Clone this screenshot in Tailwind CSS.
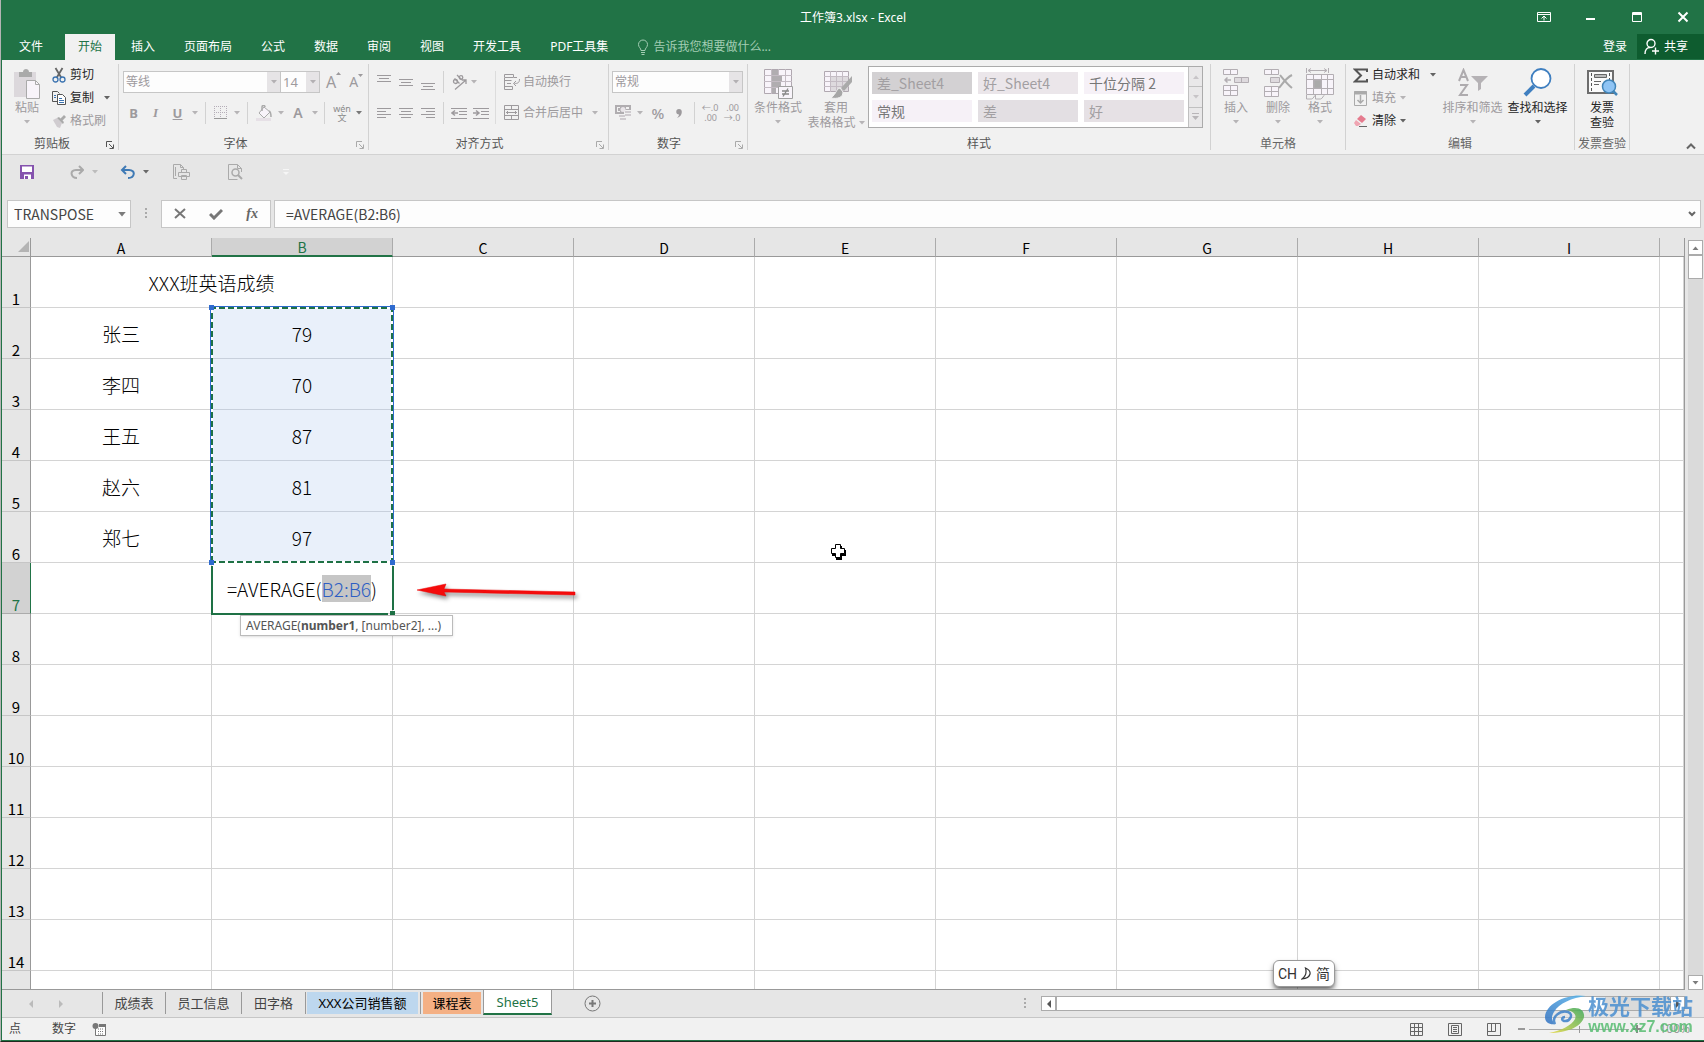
<!DOCTYPE html>
<html lang="zh-CN">
<head>
<meta charset="utf-8">
<title>工作簿3.xlsx - Excel</title>
<script src="https://cdn.jsdelivr.net/npm/@tailwindcss/browser@4"></script>
</head>
<body class="bg-[#1f2a20]">
<svg class="hidden">
  <symbol id="caret" viewBox="0 0 6 4"><path d="M0 0h6L3 3.6z" fill="currentColor" fill-opacity=".7"/></symbol>
  <symbol id="launch" viewBox="0 0 8 8"><path d="M.5 6V.5H6M3 3l4 4M7.500 3.500v4h-4" fill="none" stroke="currentColor"/></symbol>
</svg>
<div class="relative flex h-screen flex-col overflow-hidden border-b border-b-[#1f2a20] border-l border-l-[#b4b4b4] font-['Noto_Sans','Noto_Sans_CJK_SC',sans-serif] text-xs leading-4 text-[#444]">
<div class="flex min-h-0 flex-1 flex-col border-b border-l border-[#217346] bg-[#e6e6e6]">

  <!-- Title bar and ribbon tabs -->
  <header class="bg-[#217346] text-white">
    <div class="grid h-[34px] grid-cols-[1fr_auto_1fr] items-center">
      <span></span>
      <h1 class="pt-px">工作簿3.xlsx - Excel</h1>
      <div class="flex justify-end gap-[34px] pr-[15px]">
        <button aria-label="功能区显示选项"><svg width="14" height="12" fill="none" stroke="#fff"><path d="M.5 1.500h13v9H.5zM.5 3.500h13M7 9.500V5M4.500 7.500L7 5l2.500 2.500"/></svg></button>
        <button aria-label="最小化"><svg width="12" height="12"><path d="M1 7h9v2H1z" fill="#fff"/></svg></button>
        <button aria-label="最大化"><svg width="12" height="12" fill="none" stroke="#fff"><path d="M1.500 1.500h9v9h-9zM1 2.500h10M1 3.500h10"/></svg></button>
        <button aria-label="关闭"><svg width="12" height="12" fill="none" stroke="#fff" stroke-width="2"><path d="M1.500 1.500l9 9M10.500 1.500l-9 9"/></svg></button>
      </div>
    </div>
    <nav class="flex h-[26px] gap-[3px] whitespace-nowrap">
      <button class="w-[60px] pl-[17px] text-left">文件</button>
      <button class="bg-[#f1f1f1] px-[13px] text-[#217346]">开始</button>
      <button class="px-[13px]">插入</button>
      <button class="px-[13px]">页面布局</button>
      <button class="px-[13px]">公式</button>
      <button class="px-[13px]">数据</button>
      <button class="px-[13px]">审阅</button>
      <button class="px-[13px]">视图</button>
      <button class="px-[13px]">开发工具</button>
      <button class="px-[13px]">PDF工具集</button>
      <label class="ml-[13px] flex items-center gap-1 text-[#a3cdb4]">
        <svg width="12" height="16" fill="none" stroke="#a3cdb4"><path d="M4 11.500c0-2.500-2.500-3-2.500-6a4.500 4.500 0 019 0c0 3-2.500 3.500-2.500 6zM4 13.500h4M4.500 15.500h3"/></svg>
        <input class="w-[140px] placeholder:text-[#a3cdb4]" placeholder="告诉我您想要做什么...">
      </label>
      <span class="flex-1"></span>
      <button class="px-[7px]">登录</button>
      <button class="mb-px flex w-[67px] items-center gap-1 bg-[#0e5c2f] pl-[7px]">
        <svg width="16" height="17" fill="none" stroke="#fff" stroke-width="1.400"><circle cx="7" cy="5.500" r="4"/><path d="M1 16c0-4 2-6.500 5-6.500M11.500 9.500v7M8 13h7"/></svg>共享
      </button>
    </nav>
  </header>

  <!-- Ribbon -->
  <section class="flex h-[95px] border-b border-[#d2d2d2] bg-[#f1f1f1] whitespace-nowrap text-[#9d9a9d]">

    <div class="flex w-[116px] flex-col">
      <div class="flex h-[72px]">
        <button class="flex w-[50px] flex-col items-center pt-2">
          <svg width="30" height="32"><path d="M2 4h22v25H2z" fill="#dcd8dc"/><path d="M7 9V4h4c0-4 6-4 6 0h3v5z" fill="#aaa"/><path d="M14.500 12.500h9l4 4v14h-13z" fill="#f8f4fa" stroke="#aaa"/><path d="M23.500 12.500v4h4" fill="none" stroke="#aaa"/></svg>
          <span>粘贴</span><svg class="mt-1 h-1 w-[6px]"><use href="#caret"/></svg>
        </button>
        <div class="flex flex-col gap-[7px] pt-[7px] text-[#262626]">
          <button class="flex h-4 items-center gap-1"><svg width="14" height="16" fill="none"><path d="M3.500 1l6 10M10.500 1l-6 10" stroke="#666" stroke-width="1.800"/><circle cx="3.500" cy="12.500" r="2.500" stroke="#3b73b0" stroke-width="1.300"/><circle cx="10.500" cy="12.500" r="2.500" stroke="#3b73b0" stroke-width="1.300"/></svg>剪切</button>
          <button class="flex h-4 items-center gap-1"><svg width="14" height="14" fill="none" stroke="#555"><path d="M5 10.500H.5V.5h5l2 2"/><path d="M5.500 3.500h5l3 3v7h-8z" fill="#fff"/><path d="M7 7.500h3M7 9.500h5M7 11.500h5M2 4.500h2M2 6.500h2" stroke="#3b73b0"/></svg>复制<svg class="ml-[6px] h-1 w-[6px]"><use href="#caret"/></svg></button>
          <button class="flex h-4 items-center gap-1 text-[#9d9a9d]"><svg width="14" height="14"><path d="M1 6l4-2 5 5-2 5-3-1z" fill="#d0ccd0"/><path d="M5 4l2-1 1.500 1.500L12 1l2 2-3.500 3.500L12 8l-1 2z" fill="#aaa"/></svg>格式刷</button>
        </div>
      </div>
      <div class="flex h-[22px] items-center pt-[2px] text-[#555]"><span class="flex-1 pr-1 text-center">剪贴板</span><button class="mt-[2px] mr-1" aria-label="剪贴板设置"><svg class="size-2"><use href="#launch"/></svg></button></div>
    </div>
    <i class="my-1 w-px bg-[#d2d2d2]"></i>

    <div class="flex w-[249px] flex-col">
      <div class="flex h-[72px] flex-col gap-[9px] pt-[11px] pl-1">
        <div class="flex h-[22px] text-sm">
          <div class="relative w-[158px]"><select aria-label="字体" class="h-full w-full appearance-none border border-[#c6c6c6] bg-[#fdfdfd] pl-[2px] text-xs"><option>等线</option></select><span class="pointer-events-none absolute inset-y-px right-px flex w-[13px] items-center justify-center bg-[#e6e4e6]"><svg class="h-1 w-[6px]"><use href="#caret"/></svg></span></div>
          <div class="relative -ml-px w-10"><select aria-label="字号" class="h-full w-full appearance-none border border-[#c6c6c6] bg-[#fdfdfd] pl-[2px] text-[13px]"><option>14</option></select><span class="pointer-events-none absolute inset-y-px right-px flex w-[13px] items-center justify-center bg-[#e6e4e6]"><svg class="h-1 w-[6px]"><use href="#caret"/></svg></span></div>
          <button class="ml-[6px] flex items-start text-base leading-[22px]" aria-label="增大字号">A<svg width="5" height="5"><path d="M0 4h5L2.500 1z" fill="currentColor"/></svg></button>
          <button class="ml-2 flex items-center" aria-label="减小字号">A<svg class="mb-3" width="5" height="4"><path d="M0 0h5L2.500 3z" fill="currentColor"/></svg></button>
        </div>
        <div class="flex h-[22px] items-center text-[13px]">
          <button class="w-[21px] font-bold">B</button>
          <button class="w-[23px] font-['Liberation_Serif',serif] font-bold italic">I</button>
          <button class="w-[21px] font-bold underline">U</button>
          <button class="flex w-[14px] justify-center" aria-label="下划线类型"><svg class="h-1 w-[6px]"><use href="#caret"/></svg></button>
          <i class="mx-[3px] h-full w-px bg-[#d2d2d2]"></i>
          <button class="flex w-[22px] justify-center" aria-label="边框"><svg width="13" height="14" fill="none" stroke="#b5aeb8" stroke-dasharray="1 1"><path d="M0 .5h13M0 6.500h13M.5 0v12M6.500 0v12M12.500 0v12"/><path d="M0 12.500h13" stroke="#999" stroke-dasharray="none"/></svg></button>
          <button class="flex w-3 justify-center" aria-label="边框选项"><svg class="h-1 w-[6px]"><use href="#caret"/></svg></button>
          <i class="mx-1 h-full w-px bg-[#d2d2d2]"></i>
          <button class="flex w-6 justify-center" aria-label="填充颜色"><svg width="17" height="17"><path d="M8 2l6 5-6 6-5-5z" fill="#f8f4fa" stroke="#aaa"/><path d="M6 6V2c0-2 3-2 3 0M13 6c2 1 2 3 2 6" fill="none" stroke="#aaa" stroke-width="1.500"/><path d="M0 13h15v3H0z" fill="#e6e0e6"/></svg></button>
          <button class="flex w-[10px] justify-center" aria-label="填充选项"><svg class="h-1 w-[6px]"><use href="#caret"/></svg></button>
          <button class="w-6 text-sm font-semibold">A</button>
          <button class="flex w-[10px] justify-center" aria-label="字体颜色选项"><svg class="h-1 w-[6px]"><use href="#caret"/></svg></button>
          <i class="mx-1 h-full w-px bg-[#d2d2d2]"></i>
          <button class="flex w-[26px] flex-col items-center text-[9px] leading-[9px] text-[#8a8a8a]"><span>wén</span><span>文</span></button>
          <button class="flex w-2 justify-center text-[#444]" aria-label="拼音选项"><svg class="h-1 w-[6px]"><use href="#caret"/></svg></button>
        </div>
      </div>
      <div class="flex h-[22px] items-center pt-[2px] text-[#555]"><span class="flex-1 pr-[18px] pl-[14px] text-center">字体</span><button class="mt-[2px] mr-1 text-[#aaa]" aria-label="字体设置"><svg class="size-2"><use href="#launch"/></svg></button></div>
    </div>
    <i class="my-1 w-px bg-[#d2d2d2]"></i>

    <div class="flex w-[239px] flex-col">
      <div class="flex h-[72px] pt-[11px] pl-1">
        <div class="flex w-[119px] flex-col gap-[9px]">
          <div class="flex h-[22px] items-center">
            <button class="flex w-[22px] justify-center" aria-label="顶端对齐"><svg width="14" height="16" stroke="currentColor"><path d="M0 1.500h14M2 4.500h10M0 7.500h14"/></svg></button>
            <button class="flex w-[22px] justify-center" aria-label="垂直居中"><svg width="14" height="16" stroke="currentColor"><path d="M0 5.500h14M2 8.500h10M0 11.500h14"/></svg></button>
            <button class="flex w-[22px] justify-center" aria-label="底端对齐"><svg width="14" height="16" stroke="currentColor"><path d="M0 9.500h14M2 12.500h10M0 15.500h14"/></svg></button>
            <i class="mx-1 h-full w-px bg-[#d2d2d2]"></i>
            <button class="flex w-[22px] justify-center" aria-label="方向"><svg width="17" height="17" fill="none" stroke="currentColor" stroke-width="1.300"><circle cx="4.500" cy="7.500" r="2"/><path d="M3.500 4.500l5 5M6 1l5 5"/><circle cx="10" cy="3.500" r="1.800"/><path d="M4 15.500L15 6M15 10V6h-4"/></svg></button>
            <button class="flex w-2 justify-center" aria-label="方向选项"><svg class="h-1 w-[6px]"><use href="#caret"/></svg></button>
          </div>
          <div class="flex h-[22px] items-center">
            <button class="flex w-[22px] justify-center" aria-label="左对齐"><svg width="14" height="12" stroke="currentColor"><path d="M0 1.500h14M0 4.500h9M0 7.500h14M0 10.500h9"/></svg></button>
            <button class="flex w-[22px] justify-center" aria-label="居中"><svg width="14" height="12" stroke="currentColor"><path d="M0 1.500h14M2 4.500h10M0 7.500h14M2 10.500h10"/></svg></button>
            <button class="flex w-[22px] justify-center" aria-label="右对齐"><svg width="14" height="12" stroke="currentColor"><path d="M0 1.500h14M5 4.500h9M0 7.500h14M5 10.500h9"/></svg></button>
            <i class="mx-1 h-full w-px bg-[#d2d2d2]"></i>
            <button class="flex w-[22px] justify-center" aria-label="减少缩进"><svg width="16" height="13" fill="none" stroke="currentColor"><path d="M0 1.500h16M8 4.500h8M8 7.500h8M0 11.500h16"/><path d="M7 6H1M4 3.500L1 6l3 2.500" stroke-width="1.500"/></svg></button>
            <button class="flex w-[22px] justify-center" aria-label="增加缩进"><svg width="16" height="13" fill="none" stroke="currentColor"><path d="M0 1.500h16M8 4.500h8M8 7.500h8M0 11.500h16"/><path d="M0 6h6M3 3.500L6 6 3 8.500" stroke-width="1.500"/></svg></button>
          </div>
        </div>
        <i class="mx-[3px] mb-2 w-px bg-[#dcdcdc]"></i>
        <div class="flex flex-col gap-[9px] pl-[5px]">
          <button class="flex h-[22px] items-center gap-[3px]"><svg width="16" height="16" fill="none" stroke="currentColor"><path d="M.5.5h9v3h-9zM.5 6.500h7M.5 4v11.500h8v-3h-8M3 9.500h4M10 3.500h3M15.500 5c0 4-2 4.500-5 4.500M12 7l-2.500 2.500L12 12"/></svg>自动换行</button>
          <button class="flex h-[22px] items-center gap-[3px]"><svg width="16" height="16" fill="none" stroke="currentColor"><path d="M.5.500h14v14H.5zM.5 4.500h14M.5 10.500h14M7.500 0v4M7.500 11v4M2 7.500h11M4 6L2.500 7.500 4 9M11 6l1.500 1.500L11 9"/></svg>合并后居中<svg class="ml-[6px] h-1 w-[6px]"><use href="#caret"/></svg></button>
        </div>
      </div>
      <div class="flex h-[22px] items-center pt-[2px] text-[#555]"><span class="flex-1 pr-[68px] pl-[62px] text-center">对齐方式</span><button class="mt-[2px] mr-1 text-[#aaa]" aria-label="对齐设置"><svg class="size-2"><use href="#launch"/></svg></button></div>
    </div>
    <i class="my-1 w-px bg-[#d2d2d2]"></i>

    <div class="flex w-[138px] flex-col">
      <div class="flex h-[72px] flex-col gap-[9px] pt-[11px] pl-[3px]">
        <div class="relative h-[22px] w-[131px]"><select aria-label="数字格式" class="h-full w-full appearance-none border border-[#c6c6c6] bg-[#fdfdfd] pl-[2px]"><option>常规</option></select><span class="pointer-events-none absolute inset-y-px right-px flex w-[13px] items-center justify-center bg-[#e6e4e6]"><svg class="h-1 w-[6px]"><use href="#caret"/></svg></span></div>
        <div class="flex h-[22px] items-center">
          <button class="flex w-[22px] justify-center" aria-label="会计数字格式"><svg width="17" height="16"><path d="M0 0h16v5H9v4H0z" fill="#b0adb0"/><path d="M2 2h3v1H3v3h2v1H2zM11 2h3v2h-3z" fill="#f1f1f1"/><circle cx="8" cy="4.500" r="2.500" fill="#e8e4e8"/><path d="M10 6h6v2h-6zM10 9h6v2h-6zM4 10h6v2H4zM5 13h6v2H5z" fill="#cfcbcf"/></svg></button>
          <button class="flex w-[12px] justify-center" aria-label="货币选项"><svg class="h-1 w-[6px]"><use href="#caret"/></svg></button>
          <button class="w-6 text-[15px] font-medium">%</button>
          <button class="flex w-[18px] justify-center" aria-label="千位分隔样式"><svg width="6" height="9"><path d="M3 0a3 3 0 012.800 3C5.800 6 4 8 1 9c1.500-1.500 2-2.500 2-3.500A2.700 2.700 0 013 0z" fill="currentColor"/></svg></button>
          <i class="ml-[6px] h-full w-px bg-[#d2d2d2]"></i>
          <button class="ml-1 w-[22px] text-[9px] leading-[10px]"><span class="block">←.0</span><span class="block pr-1 text-right">.00</span></button>
          <button class="w-[22px] text-[9px] leading-[10px]"><span class="block pr-1 text-right">.00</span><span class="block">→.0</span></button>
        </div>
      </div>
      <div class="flex h-[22px] items-center pt-[2px] text-[#555]"><span class="flex-1 pr-[6px] text-center">数字</span><button class="mt-[2px] mr-1 text-[#aaa]" aria-label="数字设置"><svg class="size-2"><use href="#launch"/></svg></button></div>
    </div>
    <i class="my-1 w-px bg-[#d2d2d2]"></i>

    <div class="flex w-[462px] flex-col">
      <div class="flex h-[72px]">
        <button class="flex w-[60px] flex-col items-center pt-2">
          <svg width="30" height="32" fill="none"><path d="M1.500 1.500h27v24h-27z" fill="#f8f4fa" stroke="#b0a8b0"/><path d="M1 7.500h28M1 13.500h28M1 19.500h28M8.500 1v25M15.500 1v25M22.500 1v25" stroke="#c4bcc4"/><path d="M9 2h6v5H9zM9 8h10v5H9zM9 14h9v5H9zM9 20h4v5H9z" fill="#b0adb0"/><path d="M15.500 18.500h14v12h-14z" fill="#f8f4fa" stroke="#a0a0a0"/><path d="M19 23h7M19 26h7M25 20.500l-5 8" stroke="#888" stroke-width="1.300"/></svg>
          <span>条件格式</span><svg class="mt-1 h-1 w-[6px]"><use href="#caret"/></svg>
        </button>
        <button class="flex w-14 flex-col items-center pt-2 leading-[15px]">
          <svg class="ml-1" width="30" height="32" fill="none"><path d="M1.500 3.500h24v20h-24z" fill="#f8f4fa" stroke="#b0a8b0"/><path d="M7 9h18v14H7z" fill="#dedade"/><path d="M1 8.500h25M1 13.500h25M1 18.500h25M7.500 3v21M13.500 3v21M19.500 3v21" stroke="#c4bcc4"/><path d="M29 8v6l-8 9-3-3z" fill="#aaa"/><path d="M17 20c-4 1-3 5-9 10 6 1 12 0 12-6z" fill="#a6a6a6" stroke="#f1f1f1"/></svg>
          <span>套用</span><span class="flex items-center gap-[3px]">表格格式<svg class="h-1 w-[6px]"><use href="#caret"/></svg></span>
        </button>
        <div class="mt-[6px] ml-1 flex h-[62px] border border-[#ababab] bg-white font-['Noto_Sans_CJK_SC',sans-serif] text-sm">
          <div class="grid grid-cols-3 gap-[6px] py-[5px] pr-1 pl-[3px] text-[#a29fa2]">
            <button class="h-[22px] w-[100px] bg-[#d3d1d3] pl-[5px] text-left">差_Sheet4</button>
            <button class="h-[22px] w-[100px] bg-[#ebe6ea] pl-[5px] text-left">好_Sheet4</button>
            <button class="h-[22px] w-[100px] bg-[#f6f1f7] pl-[5px] text-left text-[#777]">千位分隔 2</button>
            <button class="h-[22px] w-[100px] bg-[#f6f1f7] pl-[5px] text-left text-[#777]">常规</button>
            <button class="h-[22px] w-[100px] bg-[#e3dfe3] pl-[5px] text-left">差</button>
            <button class="h-[22px] w-[100px] bg-[#e6e1e5] pl-[5px] text-left">好</button>
          </div>
          <div class="flex w-[14px] flex-col divide-y divide-[#c0c0c0] border-l border-[#c0c0c0] bg-[#e9e8e9] text-[#b8b5b8]">
            <button class="flex flex-1 items-center justify-center" aria-label="上一行"><svg class="h-1 w-[6px] rotate-180"><use href="#caret"/></svg></button>
            <button class="flex flex-1 items-center justify-center" aria-label="下一行"><svg class="h-1 w-[6px]"><use href="#caret"/></svg></button>
            <button class="flex flex-1 items-center justify-center" aria-label="其他样式"><svg width="7" height="8"><path d="M0 .5h7" stroke="currentColor"/><path d="M0 3h7L3.500 7z" fill="currentColor"/></svg></button>
          </div>
        </div>
      </div>
      <div class="flex h-[22px] items-center justify-center pt-[2px] text-[#555]">样式</div>
    </div>
    <i class="my-1 w-px bg-[#d2d2d2]"></i>

    <div class="flex w-[134px] flex-col">
      <div class="flex h-[72px] pl-1">
        <button class="flex w-[42px] flex-col items-center pt-2">
          <svg width="28" height="32" fill="none" stroke="#b3aeb3"><path d="M1.500 1.500h14v5h-14zM8.500 1v6M1.500 17.500h14v10h-14zM8.500 17v11M1 22.500h15" fill="#f8f4fa"/><path d="M12.500 9.500h14v5h-14zM19.500 9v6" fill="#dedade"/><path d="M9 12H3M5.500 9.500L3 12l2.500 2.500" stroke-width="1.500"/></svg>
          <span>插入</span><svg class="mt-1 h-1 w-[6px]"><use href="#caret"/></svg>
        </button>
        <button class="flex w-[42px] flex-col items-center pt-2">
          <svg width="30" height="32" fill="none" stroke="#b3aeb3"><path d="M1.500 1.500h14v5h-14zM8.500 1v6M1.500 18.500h14v10h-14zM8.500 18v11M1 23.500h15" fill="#f8f4fa"/><path d="M7.500 9.500h9v5h-9z" fill="#dedade"/><path d="M17 7c4 5 7 9 12 13M29 7c-6 3-9 8-13 13" stroke="#aaa" stroke-width="2"/></svg>
          <span>删除</span><svg class="mt-1 h-1 w-[6px]"><use href="#caret"/></svg>
        </button>
        <button class="flex w-[42px] flex-col items-center pt-2">
          <svg width="30" height="32" fill="none" stroke="#b3aeb3"><path d="M1.500 0v5M23.500 0v5M3 2.500h19M6 .5l-3 2 3 2M19 .5l3 2-3 2"/><path d="M1.500 6.500h27v20h-27z" fill="#f8f4fa"/><path d="M1 11.500h28M1 20.500h28M8.500 6v20M16.500 6v20M22.500 6v20"/><path d="M9 12h7v8H9z" fill="#aaa"/><path d="M1.500 27v4h5c2 0 3-4 4-4v4h5c2 0 3-4 4-4"/></svg>
          <span>格式</span><svg class="mt-1 h-1 w-[6px]"><use href="#caret"/></svg>
        </button>
      </div>
      <div class="flex h-[22px] items-center justify-center pt-[2px] text-[#666]">单元格</div>
    </div>
    <i class="my-1 w-px bg-[#d2d2d2]"></i>

    <div class="flex w-[228px] flex-col">
      <div class="flex h-[72px] pl-[7px]">
        <div class="flex w-[87px] flex-col gap-[7px] pt-[7px] text-[#262626]">
          <button class="flex h-4 items-center gap-1"><svg width="15" height="15" fill="none" stroke="#555" stroke-width="2"><path d="M14 4V1.500H2L8 7.500 2 13.500h12V11"/></svg>自动求和<svg class="ml-[6px] h-1 w-[6px]"><use href="#caret"/></svg></button>
          <button class="flex h-4 items-center gap-1 text-[#9d9a9d]"><svg width="15" height="16" fill="none" stroke="#aaa"><path d="M1.500 1.500h12v14h-12z"/><path d="M1 3h13" stroke-width="3"/><path d="M7.500 5v8M4.500 10l3 3 3-3" stroke-width="1.500"/></svg>填充<svg class="h-1 w-[6px]"><use href="#caret"/></svg></button>
          <button class="flex h-4 items-center gap-1"><svg width="15" height="14"><path d="M8 1l5 4-4 4-5-4z" fill="#e57b8e"/><path d="M3 6l5 4-3 2H3L1 9z" fill="#f0a5b2"/><path d="M6 12.500h8" stroke="#666"/></svg>清除<svg class="h-1 w-[6px]"><use href="#caret"/></svg></button>
        </div>
        <button class="flex w-[65px] flex-col items-center pt-2">
          <svg width="32" height="32" fill="none" stroke="#aeabae" stroke-width="2"><path d="M2 13L6.500 2 11 13M3.500 9h6M3 17h7L3 27h8"/><path d="M14 8h17l-7 7v6l-3 2v-8z" fill="#b5b2b5" stroke="none"/></svg>
          <span>排序和筛选</span><svg class="mt-1 h-1 w-[6px]"><use href="#caret"/></svg>
        </button>
        <button class="flex w-[65px] flex-col items-center pt-2 text-[#262626]">
          <svg width="30" height="32"><path d="M2 27l9-9" stroke="#3f7fc0" stroke-width="4"/><circle cx="18" cy="10.500" r="9.500" fill="#fff" stroke="#3f7fc0" stroke-width="1.800"/></svg>
          <span>查找和选择</span><svg class="mt-1 h-1 w-[6px]"><use href="#caret"/></svg>
        </button>
      </div>
      <div class="flex h-[22px] items-center justify-center pt-[2px] text-[#666]">编辑</div>
    </div>
    <i class="my-1 w-px bg-[#d2d2d2]"></i>

    <div class="flex w-[54px] flex-col">
      <button class="flex h-[72px] flex-col items-center pt-2 leading-[15px] text-[#262626]">
        <svg width="32" height="32" fill="none"><path d="M2 3h25v22H2z" fill="#fafafa" stroke="#6e6e6e" stroke-width="2"/><path d="M5.500 5v18M23.500 5v8" stroke="#555" stroke-dasharray="3 2"/><path d="M8.500 6.500h12v3h-12z" fill="#bbb" stroke="#666"/><path d="M8 13.500h7M8 16.500h5" stroke="#666"/><circle cx="23" cy="18.500" r="6.500" fill="#8fc4f4" stroke="#4285b8" stroke-width="1.500"/><path d="M27 23l4 4" stroke="#4285b8" stroke-width="2.500"/></svg>
        <span>发票</span><span>查验</span>
      </button>
      <div class="flex h-[22px] items-center justify-center pt-[2px] text-[#666]">发票查验</div>
    </div>
    <i class="my-1 w-px bg-[#d2d2d2]"></i>
    <div class="flex flex-1 items-end justify-end pr-2 pb-1"><button aria-label="折叠功能区"><svg width="10" height="7" fill="none" stroke="#666" stroke-width="2"><path d="M1 5.500l4-4 4 4"/></svg></button></div>
  </section>

  <!-- Quick access toolbar -->
  <div class="flex h-[45px] items-center pb-[11px] pl-[18px] text-[#aaa]">
    <button aria-label="保存"><svg width="14" height="14"><path d="M0 0h14v14H0z" fill="#8553ae"/><path d="M2 1.500h10V7H2zM4 9.500h7V14H4z" fill="#fff"/><path d="M5 11h3v3H5z" fill="#8553ae"/></svg></button>
    <button class="ml-9" aria-label="恢复"><svg width="14" height="14" fill="none" stroke="currentColor" stroke-width="2"><path d="M7 13C1 13-1 5 6 5h7M9 1l4 4-4 4"/></svg></button>
    <svg class="ml-2 h-1 w-[6px]"><use href="#caret"/></svg>
    <button class="ml-[22px]" aria-label="撤消"><svg width="15" height="14" fill="none" stroke="#3f7ab5" stroke-width="2"><path d="M8 13c7 0 8-8 1-8H2M6 1L2 5l4 4"/></svg></button>
    <svg class="ml-2 h-1 w-[6px] text-[#333]"><use href="#caret"/></svg>
    <button class="ml-6" aria-label="打印预览"><svg width="17" height="16" fill="none" stroke="currentColor"><path d="M4 14.500H.5v-14h7l3 3V6M7.500.5v3h3M2.500 3v9"/><path d="M8.500 8V5.500h5V8M5.500 8.500h11v4h-11zM8.500 11.500h5v4h-5z" fill="#e6e6e6"/></svg></button>
    <button class="ml-[38px]" aria-label="预览全屏"><svg width="15" height="16" fill="none" stroke="currentColor"><path d="M13.500 8V4.500l-4-4H.5v15h9M9.500.5v4h4"/><circle cx="7.500" cy="8.500" r="3.500" stroke-width="1.500"/><path d="M10 11l4 4" stroke-width="2"/></svg></button>
    <button class="ml-[40px] text-[#f6f6f6]" aria-label="自定义快速访问工具栏"><svg width="6" height="7"><path d="M0 .5h6" stroke="currentColor"/><path d="M0 3h6L3 6z" fill="currentColor"/></svg></button>
  </div>

  <!-- Formula bar -->
  <div class="flex h-7 items-stretch pr-[3px] pl-[5px] font-['Noto_Sans_CJK_SC',sans-serif] text-sm">
    <label class="flex w-[124px] items-center border border-[#c6c6c6] bg-[#fdfdfd] pr-1 pl-[6px]"><input aria-label="名称框" class="w-0 flex-1" value="TRANSPOSE"><svg class="h-[5px] w-2 text-[#444]"><use href="#caret"/></svg></label>
    <svg class="mx-[13px] self-center" width="4" height="12" fill="#aaa"><path d="M1 0h2v2H1zM1 4h2v2H1zM1 8h2v2H1z"/></svg>
    <div class="flex w-[110px] items-center justify-between border border-[#c6c6c6] bg-[#fdfdfd] px-3">
      <button aria-label="取消"><svg width="12" height="12" fill="none" stroke="#777" stroke-width="2"><path d="M1 1l10 9M11 1L1 10"/></svg></button>
      <button aria-label="输入"><svg width="14" height="12" fill="none" stroke="#777" stroke-width="3"><path d="M1 6l4 4 8-8"/></svg></button>
      <button class="font-['Liberation_Serif',serif] font-bold text-[#666] italic">fx</button>
    </div>
    <label class="ml-[3px] flex flex-1 items-center border border-[#c6c6c6] bg-[#fdfdfd] pr-1 pl-[11px]"><input aria-label="编辑栏" class="min-w-0 flex-1" value="=AVERAGE(B2:B6)"><svg width="8" height="6" fill="none" stroke="#666" stroke-width="2"><path d="M1 1l3 3 3-3"/></svg></label>
  </div>

  <!-- Worksheet -->
  <main class="flex min-h-0 flex-1 pt-[10px] font-['Noto_Sans_CJK_SC',sans-serif]">
    <div class="relative min-w-0 flex-1 overflow-hidden border-b border-[#999]">
      <table class="w-full table-fixed border-separate border-spacing-0 text-center text-black">
        <colgroup><col class="w-[29px]"><col class="w-[181px]"><col class="w-[181px]"><col class="w-[181px]"><col class="w-[181px]"><col class="w-[181px]"><col class="w-[181px]"><col class="w-[181px]"><col class="w-[181px]"><col class="w-[181px]"><col></colgroup>
        <thead><tr id="heads" class="text-sm leading-4"></tr></thead>
        <tbody id="rows" class="text-[19px] font-light"></tbody>
      </table>
      <!-- Marquee around B2:B6 and editing frame of B7 -->
      <svg class="pointer-events-none absolute top-[66px] left-[205px]" width="190" height="316" fill="none">
        <path d="M3.500 4v255M186.500 4v255M4 2.500h182" stroke="#2f6bcf"/>
        <path d="M5 258V4h180v254z" stroke="#fff" stroke-width="2"/>
        <path d="M5 258V4h180v254z" stroke="#1e7145" stroke-width="2" stroke-dasharray="6 3"/>
        <path d="M5 262v48h176M186 262v44" stroke="#1e7145" stroke-width="2"/>
        <path d="M2 1h5v5H2zM183 1h5v5h-5zM2 256h5v5H2zM183 256h5v5h-5z" fill="#2f6bcf"/>
        <path d="M183 307h5v5h-5z" fill="#1e7145"/>
      </svg>
      <div class="absolute top-[377px] left-[238px] border border-[#bbb] bg-white pr-[11px] pl-[5px] font-['Noto_Sans',sans-serif] leading-[19px] whitespace-nowrap text-[#555] shadow">AVERAGE(<b>number1</b>, [number2], ...)</div>
      <svg class="absolute top-[341px] left-[411px] drop-shadow-[2px_3px_2px_rgba(0,0,0,0.45)]" width="170" height="26"><path d="M4 11l29-6-2 5 131 3v3L31 13l2 4z" fill="#f40c0c" stroke="#e00" stroke-width=".5"/></svg>
      <svg class="absolute top-[305px] left-[828px]" width="18" height="18"><path d="M6 3h6v4h4v6h-4v4H6v-4H2V7h4z" fill="#000"/><path d="M5.500 1.500h5v4h4v5h-4v4h-5v-4h-4v-5h4z" fill="#fff" stroke="#000"/></svg>
      <div class="absolute right-[349px] bottom-[2px] flex h-[27px] items-center gap-1 rounded-md border border-[#999] bg-white px-1 font-['Roboto','Noto_Sans_CJK_SC',sans-serif] text-sm text-[#333] shadow-md shadow-black/50">CH<svg width="11" height="13" fill="none" stroke="#333" stroke-width="1.200"><path d="M4.500 1c7 3 6 10-3.500 11 4-3 5-6 3.500-11z"/></svg>简</div>
    </div>
    <div class="flex w-5 flex-col border-l border-[#999] pt-[2px] pr-px pl-[3px]">
      <button class="flex h-[15px] items-center justify-center border border-[#ababab] bg-white text-[#444]" aria-label="向上滚动"><svg class="h-1 w-[7px] rotate-180"><use href="#caret"/></svg></button>
      <div class="flex-1 bg-[#dadada]"><div class="h-6 border border-[#ababab] bg-white"></div></div>
      <button class="flex h-[15px] items-center justify-center border border-[#ababab] bg-white text-[#444]" aria-label="向下滚动"><svg class="h-1 w-[7px]"><use href="#caret"/></svg></button>
    </div>
  </main>

  <!-- Sheet tabs -->
  <div class="flex h-7 border-b border-[#c6c6c6] text-[13px] whitespace-nowrap">
    <div class="flex w-[100px] items-center gap-[26px] pl-[27px] text-[#bbb]">
      <button aria-label="上一张"><svg width="4" height="8"><path d="M4 0v8L0 4z" fill="currentColor"/></svg></button>
      <button aria-label="下一张"><svg width="4" height="8"><path d="M0 0v8l4-4z" fill="currentColor"/></svg></button>
    </div>
    <div class="flex h-6 items-stretch pt-[2px] leading-5">
      <button class="w-[63px] border-l border-[#999]">成绩表</button>
      <button class="w-[76px] border-l border-[#999]">员工信息</button>
      <button class="w-16 border-l border-[#999]">田字格</button>
      <span class="flex w-[115px] border-l border-[#999] pr-[2px] pl-px"><button class="flex-1 bg-[#bdd7ee] text-black">XXX公司销售额</button></span>
      <span class="flex w-[63px] border-l border-[#999] pr-[2px] pl-[2px]"><button class="flex-1 bg-[#f4b084] text-black">课程表</button></span>
    </div>
    <button class="h-[25px] w-[69px] border-x border-b-2 border-x-[#999] border-b-[#217346] bg-white text-[#217346]">Sheet5</button>
    <button class="ml-8" aria-label="新工作表"><svg width="17" height="17" fill="none" stroke="#777"><circle cx="8.500" cy="8.500" r="7.500"/><path d="M8.500 5v7M5 8.500h7" stroke-width="2"/></svg></button>
    <span class="flex-1"></span>
    <svg class="mr-[14px] self-center" width="4" height="12" fill="#aaa"><path d="M1 0h2v2H1zM1 4h2v2H1zM1 8h2v2H1z"/></svg>
    <div class="mr-[19px] flex h-[15px] w-[644px] self-center border border-[#ababab] bg-[#dadada]">
      <button class="flex w-[15px] items-center justify-center border-r-2 border-[#ababab] bg-white" aria-label="向左滚动"><svg width="4" height="8"><path d="M4 0v8L0 4z" fill="#555"/></svg></button>
      <div class="w-[548px] bg-white"></div>
      <span class="flex-1"></span>
      <button class="flex w-[14px] items-center justify-center border-l border-[#ababab] bg-white" aria-label="向右滚动"><svg width="4" height="8"><path d="M0 0v8l4-4z" fill="#555"/></svg></button>
    </div>
  </div>

  <!-- Status bar -->
  <footer class="flex h-[22px] items-center bg-[#f1f1f1] pl-[7px]">
    <span class="w-[43px]">点</span><span>数字</span>
    <button class="ml-4" aria-label="录制宏"><svg width="14" height="13"><path d="M3.500 5.500v7h10v-10H8" fill="#fff" stroke="#777"/><path d="M6 6h6M6 8.500h6M6 11h6" stroke="#777" stroke-dasharray="1 1"/><circle cx="3.500" cy="3" r="3" fill="#777"/><path d="M7 1h7v3H7z" fill="#777"/></svg></button>
    <span class="flex-1"></span>
    <div class="flex gap-[25px]">
      <button aria-label="普通"><svg width="13" height="13" fill="none" stroke="#666"><path d="M.5.500h12v12H.5zM.5 4.500h12M.5 8.500h12M4.500 0v13M8.500 0v13"/></svg></button>
      <button aria-label="页面布局"><svg width="14" height="13" fill="none" stroke="#666"><path d="M.5.500h13v12H.5zM3.500 2.500h7v8h-7zM5 4.500h4M5 6.500h4M5 8.500h4"/></svg></button>
      <button aria-label="分页预览"><svg width="14" height="13" fill="none" stroke="#666"><path d="M.5.500h13v12H.5zM.5 8.500h8v-8M4.500.500v8"/></svg></button>
    </div>
    <button class="ml-[17px]" aria-label="缩小"><svg width="7" height="2"><path d="M0 0h7v2H0z" fill="#999"/></svg></button>
    <input type="range" aria-label="显示比例" class="mr-1 ml-1 h-px w-[100px] appearance-none bg-[#aaa] [&::-webkit-slider-thumb]:h-[7px] [&::-webkit-slider-thumb]:w-px [&::-webkit-slider-thumb]:appearance-none [&::-webkit-slider-thumb]:bg-[#999]">
    <button aria-label="放大"><svg width="8" height="8" stroke="#888" stroke-width="2"><path d="M4 0v8M0 4h8"/></svg></button>
    <span class="mr-[14px] ml-[18px] text-[#999]">100%</span>
  </footer>
</div>

<!-- Site badge -->
<a href="#" class="absolute right-[11px] bottom-1 flex items-center font-['Noto_Sans_CJK_SC',sans-serif] opacity-85">
  <svg width="44" height="44" fill="none">
    <defs><linearGradient id="g1" x1="0" y1="1" x2="1" y2="0"><stop stop-color="#2f6fc0"/><stop offset="1" stop-color="#57b6ec"/></linearGradient><linearGradient id="g2" x1="0" y1="1" x2="1" y2="0"><stop stop-color="#e6d840"/><stop offset="1" stop-color="#3aa85a"/></linearGradient></defs>
    <path d="M42 3C24 0 2 10 1 24c0 6 5 8 11 7-5-3-5-7-2-12C15 10 28 5 42 3z" fill="url(#g1)"/>
    <path d="M22 17c12-5 19 0 18 7-2 9-16 16-35 16 12-2 23-8 26-14 2-5-2-8-9-9z" fill="url(#g2)"/>
    <path d="M11 31c-4-7 5-14 13-12 6 2 2 10-4 9-3-1-2-4 1-4" stroke="#3c80c8" stroke-width="2.500"/>
  </svg>
  <span class="flex flex-col items-center"><b class="text-[21px] leading-[23px] font-bold text-[#4a8fd0]">极光下载站</b><b class="font-['Liberation_Sans',sans-serif] text-base leading-[19px] font-bold text-[#58bd72]">www.xz7.com</b></span>
</a>
</div>

<script>
  const names = ['A', 'B', 'C', 'D', 'E', 'F', 'G', 'H', 'I', ''];
  const data = {2: ['张三', 79], 3: ['李四', 70], 4: ['王五', 87], 5: ['赵六', 81], 6: ['郑七', 97]};
  const cell = 'h-[51px] border-r border-b border-[#d4d4d4] bg-white p-0 pt-px';
  document.getElementById('heads').innerHTML =
    '<th class="h-[19px] border-r border-b border-[#999] p-0"><svg class="ml-4" width="12" height="12"><path d="M11 0v11H0z" fill="#b4b4b4"/></svg></th>' +
    names.map(n => n === 'B'
      ? '<th class="h-[19px] border-r border-b-2 border-r-[#ababab] border-b-[#217346] bg-[#d2d2d2] p-0 pt-px font-normal text-[#217346]">B</th>'
      : `<th class="h-[19px] ${n ? 'border-r' : ''} border-b border-r-[#ababab] border-b-[#999] p-0 pt-px font-normal">${n}</th>`).join('');
  let html = '';
  for (let r = 1; r <= 15; r++) {
    const active = r === 7;
    html += `<tr><th class="h-[51px] border-r border-b p-0 align-bottom text-[15px] leading-4 font-normal ${active ? 'border-r-[#217346] border-b-[#ababab] bg-[#d2d2d2] text-[#217346]' : 'border-r-[#999] border-b-[#c6c6c6] bg-[#e6e6e6]'}">${r < 15 ? r : ''}</th>`;
    let c = 0;
    if (r === 1) { html += `<td colspan="2" class="${cell}">XXX班英语成绩</td>`; c = 2; }
    for (; c < 10; c++) {
      if (c === 1 && data[r]) html += `<td class="h-[51px] border-r border-b border-[#c8d0dc] bg-[#e9f0fa] p-0 pt-px">${data[r][1]}</td>`;
      else if (c === 1 && active) html += `<td class="${cell}">=AVERAGE(<mark class="bg-[#c6c6c6] text-[#2f5fc4]">B2:B6</mark>)</td>`;
      else html += `<td class="${cell}">${c === 0 && data[r] ? data[r][0] : ''}</td>`;
    }
    html += '</tr>';
  }
  document.getElementById('rows').innerHTML = html;
</script>
</body>
</html>
